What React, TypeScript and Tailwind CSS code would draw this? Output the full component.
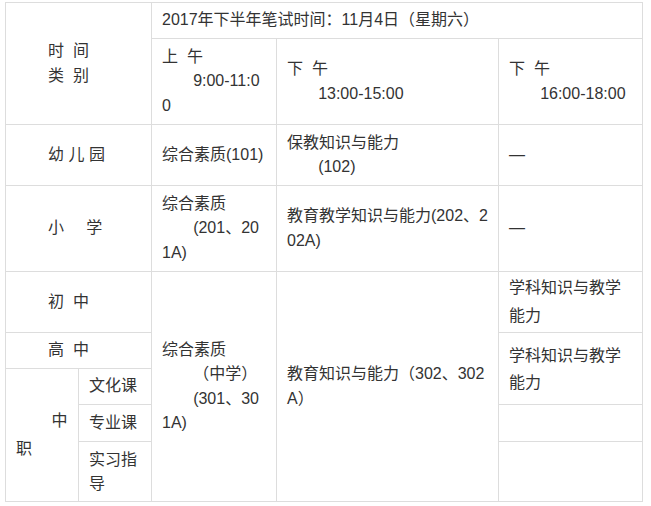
import type { ReactNode } from "react";

const NB = "\u00a0";
const ind = (n: number) => NB.repeat(n);

function Cell({ className = "", children }: { className?: string; children?: ReactNode }) {
  return (
    <div
      className={
        "flex flex-col justify-center border-r border-b border-[#dddddd] px-[10px] " + className
      }
    >
      {children}
    </div>
  );
}

const L = ({ children }: { children: ReactNode }) => (
  <span className="block whitespace-pre">{children}</span>
);

export default function App() {
  return (
    <div className="bg-white pl-[5px] pt-[2px] text-[16px] leading-[24.5px] text-[#333333] font-['Liberation_Sans','Noto_Sans_CJK_SC',sans-serif]">
      <div className="grid w-[638px] grid-cols-[73px_73px_125px_222px_144px] grid-rows-[36px_86px_61px_86px_61px_36px_36px_37px_60px] border-t border-l border-[#dddddd]">
        {/* header */}
        <Cell className="col-start-1 col-span-2 row-start-1 row-span-2 pl-[42px]">
          <L>时{ind(2)}间</L>
          <L>类{ind(2)}别</L>
        </Cell>
        <Cell className="col-start-3 col-span-3 row-start-1">
          <L>2017年下半年笔试时间：11月4日（星期六）</L>
        </Cell>
        <Cell className="col-start-3 row-start-2">
          <L>上{ind(2)}午</L>
          <L>{ind(7)}9:00-11:0</L>
          <L>0</L>
        </Cell>
        <Cell className="col-start-4 row-start-2">
          <L>下{ind(2)}午</L>
          <L>{ind(7)}13:00-15:00</L>
        </Cell>
        <Cell className="col-start-5 row-start-2">
          <L>下{ind(2)}午</L>
          <L>{ind(7)}16:00-18:00</L>
        </Cell>

        {/* 幼儿园 */}
        <Cell className="col-start-1 col-span-2 row-start-3 pl-[42px]">
          <L>幼 儿 园</L>
        </Cell>
        <Cell className="col-start-3 row-start-3">
          <L>综合素质(101)</L>
        </Cell>
        <Cell className="col-start-4 row-start-3">
          <L>保教知识与能力</L>
          <L>{ind(7)}(102)</L>
        </Cell>
        <Cell className="col-start-5 row-start-3">
          <L>—</L>
        </Cell>

        {/* 小学 */}
        <Cell className="col-start-1 col-span-2 row-start-4 pl-[42px]">
          <L>小{ind(5)}学</L>
        </Cell>
        <Cell className="col-start-3 row-start-4">
          <L>综合素质</L>
          <L>{ind(7)}(201、20</L>
          <L>1A)</L>
        </Cell>
        <Cell className="col-start-4 row-start-4">
          <L>教育教学知识与能力(202、2</L>
          <L>02A)</L>
        </Cell>
        <Cell className="col-start-5 row-start-4">
          <L>—</L>
        </Cell>

        {/* 中学 */}
        <Cell className="col-start-1 col-span-2 row-start-5 pl-[42px]">
          <L>初{ind(2)}中</L>
        </Cell>
        <Cell className="col-start-1 col-span-2 row-start-6 pl-[42px]">
          <L>高{ind(2)}中</L>
        </Cell>
        <Cell className="col-start-1 row-start-7 row-span-3 leading-[28px]">
          <L>{ind(8)}中</L>
          <L>职</L>
        </Cell>
        <Cell className="col-start-2 row-start-7">
          <L>文化课</L>
        </Cell>
        <Cell className="col-start-2 row-start-8">
          <L>专业课</L>
        </Cell>
        <Cell className="col-start-2 row-start-9 leading-[24px]">
          <L>实习指</L>
          <L>导</L>
        </Cell>
        <Cell className="col-start-3 row-start-5 row-span-5">
          <L>综合素质</L>
          <L>{ind(7)}（中学）</L>
          <L>{ind(7)}(301、30</L>
          <L>1A)</L>
        </Cell>
        <Cell className="col-start-4 row-start-5 row-span-5">
          <L>教育知识与能力（302、302</L>
          <L>A）</L>
        </Cell>
        <Cell className="col-start-5 row-start-5 leading-[28px]">
          <L>学科知识与教学</L>
          <L>能力</L>
        </Cell>
        <Cell className="col-start-5 row-start-6 row-span-2 leading-[27px]">
          <L>学科知识与教学</L>
          <L>能力</L>
        </Cell>
        <Cell className="col-start-5 row-start-8" />
        <Cell className="col-start-5 row-start-9" />
      </div>
    </div>
  );
}
